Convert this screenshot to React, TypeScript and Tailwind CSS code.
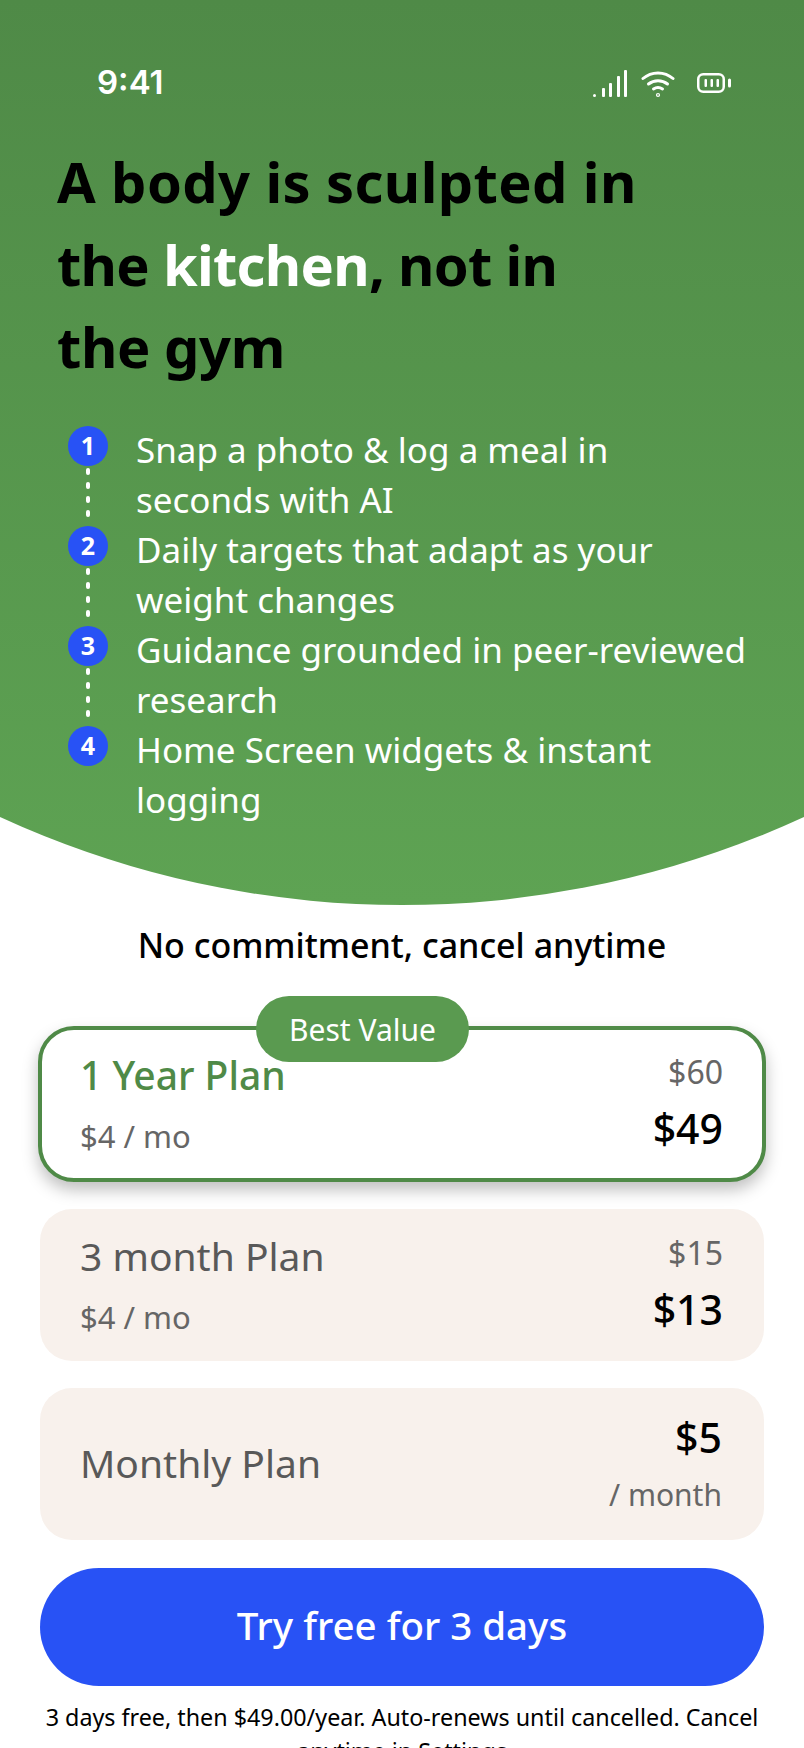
import React from "react";

const features = [
	["Snap a photo & log a meal in", "seconds with AI"],
	["Daily targets that adapt as your", "weight changes"],
	["Guidance grounded in peer-reviewed", "research"],
	["Home Screen widgets & instant", "logging"],
];

const StatusIcons = () => (
	<div className="flex items-center">
		<svg width="34" height="28" viewBox="0 0 34 28" fill="white">
			<rect x="0" y="24" width="3" height="3" rx="1.5" />
			<rect x="9" y="18" width="3" height="9" rx="1" />
			<rect x="16" y="13" width="3" height="14" rx="1" />
			<rect x="24" y="6" width="3" height="21" rx="1" />
			<rect x="31" y="0" width="3" height="27" rx="1" />
		</svg>
		<svg className="ml-[14px]" width="34" height="28" viewBox="0 0 34 28" fill="none" stroke="white" strokeWidth="3" strokeLinecap="round">
			<path d="M2 8.5C10.5 1 23.5 1 32 8.5" />
			<path d="M7.5 14C13 9.5 21 9.5 26.5 14" />
			<path d="M12.5 19C15.5 17 18.5 17 21.5 19" />
			<circle cx="17" cy="25" r="0.6" fill="white" />
		</svg>
		<svg className="ml-[22px] mb-[2px]" width="34" height="20" viewBox="0 0 34 20" fill="none">
			<rect x="1.25" y="1.25" width="25.5" height="17.5" rx="5" stroke="white" strokeWidth="2.5" />
			<rect x="7.5" y="6" width="2.5" height="8" rx="1" fill="white" />
			<rect x="13.5" y="6" width="2.5" height="8" rx="1" fill="white" />
			<rect x="19.5" y="6" width="2.5" height="8" rx="1" fill="white" />
			<rect x="31" y="5.5" width="3" height="9" rx="1.5" fill="white" />
		</svg>
	</div>
);

const Header = () => (
	<div className="h-[905px] shrink-0 bg-gradient-to-b from-[#4f8a47] to-[#5ea353] [clip-path:ellipse(935px_905px_at_50%_0%)]">
		<div className="flex items-center justify-between pl-[97px] pr-[73px] pt-[62px] h-[106px]">
			<span className="mb-[4px] font-['Inter'] text-[33px] leading-[44px] font-semibold text-white">9:41</span>
			<StatusIcons />
		</div>
		<h1 className="mt-[34px] pl-[57px] text-[56px] leading-[82.5px] font-bold text-black">
			<span className="tracking-[0.4px]">A body is sculpted in</span>
			<br />
			<span className="tracking-[-0.7px]">
				the <span className="text-white">kitchen</span>, not in
			</span>
			<br />
			<span className="tracking-[-0.4px]">the gym</span>
		</h1>
		<ul className="mt-[37px] pl-[68px] flex flex-col">
			{features.map(([first, second], i) => (
				<li key={first} className="flex h-[100px]">
					<div className="w-[40px] flex flex-col items-center shrink-0">
						<div className="w-[40px] h-[40px] mt-[1px] rounded-full bg-[#2852f5] flex items-center justify-center text-white text-[25px] leading-[36px] font-bold pb-[2px]">
							{i + 1}
						</div>
						{i < features.length - 1 && (
							<div className="mt-[2px] flex flex-col gap-[7px]">
								<div className="w-[4px] h-[7px] rounded-full bg-white" />
								<div className="w-[4px] h-[7px] rounded-full bg-white" />
								<div className="w-[4px] h-[7px] rounded-full bg-white" />
								<div className="w-[4px] h-[7px] rounded-full bg-white" />
							</div>
						)}
					</div>
					<p className="ml-[28px] whitespace-nowrap text-[35px] leading-[50px] text-white">
						{first}
						<br />
						{second}
					</p>
				</li>
			))}
		</ul>
	</div>
);

type PlanProps = {
	name: string;
	perMonth: string;
	oldPrice: string;
	price: string;
};

const PlanCard = ({ name, perMonth, oldPrice, price }: PlanProps) => (
	<div className="h-[152px] rounded-[32px] bg-[#f8f1ec] pl-[40px] pr-[41px] flex items-center justify-between">
		<div className="flex flex-col pb-[2px]">
			<span className="text-[39px] leading-[50px] text-[#595959]">{name}</span>
			<span className="mt-[16px] text-[31px] leading-[40px] text-[#666666]">{perMonth}</span>
		</div>
		<div className="flex flex-col items-end pb-[4px]">
			<span className="text-[32px] leading-[40px] text-[#666666]">{oldPrice}</span>
			<span className="mt-[11px] text-[41px] leading-[50px] font-medium text-black">{price}</span>
		</div>
	</div>
);

export default function App() {
	return (
		<div className="w-[804px] h-[1748px] overflow-hidden bg-white flex flex-col font-['Noto_Sans',sans-serif]">
			<Header />
			<p className="mt-[15px] text-center text-[34px] leading-[50px] font-medium text-black">
				No commitment, cancel anytime
			</p>
			<div className="mt-[56px] px-[40px] flex flex-col">
				<div className="relative h-[156px] -mx-[2px] rounded-[36px] border-[4px] border-[#4f8a47] bg-white shadow-[0_8px_16px_rgba(0,0,0,0.25)] pl-[38px] pr-[39px] flex items-center justify-between">
					<div className="absolute left-[214px] -top-[34px] w-[213px] h-[66px] rounded-full bg-[#5a9a50] flex items-center justify-center text-white text-[30px]">
						Best Value
					</div>
					<div className="flex flex-col pb-[2px]">
						<span className="text-[39px] leading-[50px] font-medium text-[#4f8a47]">1 Year Plan</span>
						<span className="mt-[16px] text-[31px] leading-[40px] text-[#666666]">$4 / mo</span>
					</div>
					<div className="flex flex-col items-end pb-[4px]">
						<span className="text-[32px] leading-[40px] text-[#666666]">$60</span>
						<span className="mt-[11px] text-[41px] leading-[50px] font-medium text-black">$49</span>
					</div>
				</div>
				<div className="mt-[27px]">
					<PlanCard name="3 month Plan" perMonth="$4 / mo" oldPrice="$15" price="$13" />
				</div>
				<div className="mt-[27px] h-[152px] rounded-[32px] bg-[#f8f1ec] pl-[40px] pr-[42px] flex items-center justify-between">
					<span className="pb-[2px] text-[39px] leading-[50px] text-[#595959]">Monthly Plan</span>
					<div className="flex flex-col items-end pb-[2px]">
						<span className="text-[41px] leading-[50px] font-medium text-black">$5</span>
						<span className="mt-[13px] text-[30px] leading-[40px] text-[#666666]">/ month</span>
					</div>
				</div>
				<button type="button" className="mt-[28px] h-[118px] pb-[3px] rounded-full bg-[#2852f5] text-white text-[38.5px] font-medium">
					Try free for 3 days
				</button>
			</div>
			<p className="mt-[14px] px-[30px] text-center text-[23.3px] leading-[34px] text-black">
				3 days free, then $49.00/year. Auto-renews until cancelled. Cancel anytime in Settings
			</p>
		</div>
	);
}
